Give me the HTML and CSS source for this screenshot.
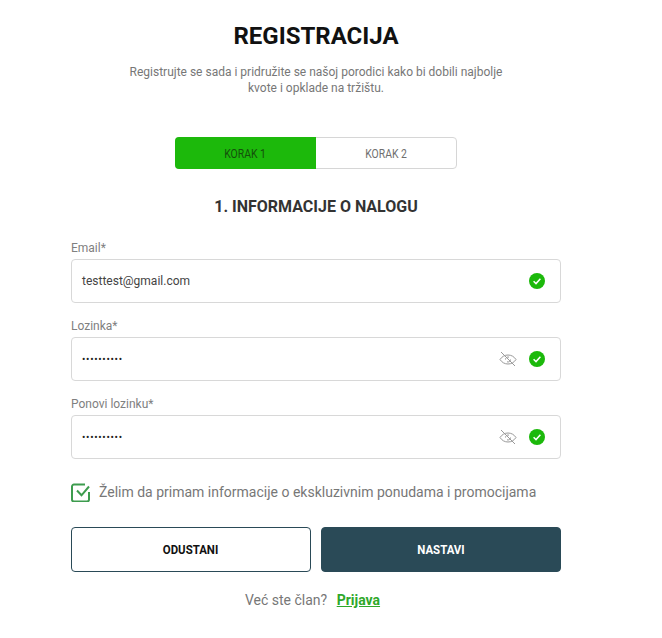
FILE: index.html
```html
<!DOCTYPE html>
<html lang="sr">
<head>
  <meta charset="UTF-8" />
  <meta name="viewport" content="width=device-width, initial-scale=1.0"/>
  <title>Registracija</title>
  <link rel="stylesheet" href="styles.css">
</head>
<body>
  <main class="register">
    <h1>REGISTRACIJA</h1>
    <p class="intro">Registrujte se sada i pridružite se našoj porodici kako bi dobili najbolje<br>kvote i opklade na tržištu.</p>

    <div class="steps">
      <div class="step step-active"><span>KORAK 1</span></div>
      <div class="step"><span>KORAK 2</span></div>
    </div>

    <h2>1. INFORMACIJE O NALOGU</h2>

    <form>
      <div class="field">
        <label>Email*</label>
        <div class="input">
          <span class="value">testtest@gmail.com</span>
          <svg class="ok" viewBox="0 0 16 16"><circle cx="8" cy="8" r="8"/><path d="M4.6 8.3l2.4 2.3 4.4-4.8"/></svg>
        </div>
      </div>

      <div class="field">
        <label>Lozinka*</label>
        <div class="input">
          <span class="value dots">••••••••••</span>
          <svg class="eye" viewBox="0 0 18 18"><path d="M1 9.500C3 6.500 5.700 5 9 5s6 1.500 8 4.500C15 12.500 12.300 14 9 14s-6-1.500-8-4.500z"/><path d="M6.500 9.500a2.500 2.500 0 0 1 3.500-2.300M11.500 9.500a2.500 2.500 0 0 1-3.500 2.300"/><path d="M2 2l14 14"/></svg>
          <svg class="ok" viewBox="0 0 16 16"><circle cx="8" cy="8" r="8"/><path d="M4.6 8.3l2.4 2.3 4.4-4.8"/></svg>
        </div>
      </div>

      <div class="field">
        <label>Ponovi lozinku*</label>
        <div class="input">
          <span class="value dots">••••••••••</span>
          <svg class="eye" viewBox="0 0 18 18"><path d="M1 9.500C3 6.500 5.700 5 9 5s6 1.500 8 4.500C15 12.500 12.300 14 9 14s-6-1.500-8-4.500z"/><path d="M6.500 9.500a2.500 2.500 0 0 1 3.500-2.300M11.500 9.500a2.500 2.500 0 0 1-3.500 2.300"/><path d="M2 2l14 14"/></svg>
          <svg class="ok" viewBox="0 0 16 16"><circle cx="8" cy="8" r="8"/><path d="M4.6 8.3l2.4 2.3 4.4-4.8"/></svg>
        </div>
      </div>

      <div class="consent">
        <svg class="check" viewBox="0 0 19 19"><path d="M14 1.500H3a2 2 0 0 0-2 2v13a2 2 0 0 0 2 2h13a2 2 0 0 0 2-2V9"/><path class="tick" d="M6 7.500l4.500 4.800L18 3.500"/></svg>
        <span>Želim da primam informacije o ekskluzivnim ponudama i promocijama</span>
      </div>

      <div class="buttons">
        <button type="button" class="btn btn-outline"><span>ODUSTANI</span></button>
        <button type="button" class="btn btn-dark"><span>NASTAVI</span></button>
      </div>
    </form>

    <p class="login">Već ste član? <a href="#">Prijava</a></p>
  </main>
</body>
</html>
```

FILE: styles.css
```css
body {
  margin: 0;
  background: #fff;
  font-family: Roboto, "Liberation Sans", sans-serif;
}
.register {
  width: 632px;
  box-sizing: border-box;
  padding: 21px 71px 0;
}
h1 {
  margin: 0;
  font-size: 24px;
  line-height: 30px;
  font-weight: 700;
  text-align: center;
  color: #111;
}
.intro {
  margin: 13px 0 0;
  font-size: 12px;
  line-height: 16px;
  text-align: center;
  color: #777;
}
.steps {
  display: flex;
  box-sizing: border-box;
  width: 282px;
  height: 32px;
  margin: 41px auto 0;
  border: 1px solid #d6d6d6;
  border-radius: 4px;
}
.step {
  flex: 1;
  display: flex;
  align-items: center;
  justify-content: center;
  font-size: 13px;
  color: #6f6f6f;
}
.step span {
  display: inline-block;
  transform: scaleX(0.8);
}
.step-active {
  margin: -1px 0 -1px -1px;
  border-radius: 4px 0 0 4px;
  background: #1cb90b;
  color: #14500c;
}
h2 {
  margin: 28px 0 0;
  font-size: 16px;
  line-height: 20px;
  font-weight: 700;
  text-align: center;
  color: #333;
}
form {
  margin-top: 23px;
}
.field {
  margin-bottom: 15px;
}
label {
  display: block;
  font-size: 12px;
  line-height: 16px;
  margin-bottom: 3px;
  color: #808080;
}
.input {
  display: flex;
  align-items: center;
  gap: 12px;
  height: 44px;
  box-sizing: border-box;
  padding: 0 15px 0 10px;
  border: 1px solid #d8d8d8;
  border-radius: 4px;
}
.value {
  flex: 1;
  font-size: 12px;
  color: #444;
}
.dots {
  font-size: 10px;
  letter-spacing: 0.7px;
  color: #222;
}
.ok {
  width: 16px;
  height: 16px;
}
.ok circle {
  fill: #1cb90b;
}
.ok path {
  fill: none;
  stroke: #fff;
  stroke-width: 1.5;
}
.eye {
  width: 18px;
  height: 18px;
  fill: none;
  stroke: #999;
  stroke-width: 1;
}
.consent {
  display: flex;
  align-items: center;
  gap: 9px;
  margin-top: 24px;
  font-size: 14px;
  line-height: 19px;
  color: #777;
}
.check {
  width: 19px;
  height: 19px;
  fill: none;
  stroke: #3d9c4e;
  stroke-width: 2;
}
.buttons {
  display: flex;
  gap: 10px;
  margin-top: 25px;
}
.btn {
  flex: 1;
  height: 45px;
  border-radius: 4px;
  font-family: inherit;
  font-size: 13px;
  font-weight: 700;
}
.btn span {
  display: inline-block;
  transform: scaleX(0.88);
}
.btn-outline {
  background: #fff;
  border: 1px solid #2a4a57;
  color: #111;
}
.btn-dark {
  background: #2a4a57;
  border: 1px solid #2a4a57;
  color: #fff;
}
.login {
  margin: 19px 0 0;
  padding-right: 7px;
  font-size: 14px;
  line-height: 18px;
  text-align: center;
  color: #777;
}
.login a {
  margin-left: 6px;
  font-weight: 700;
  color: #2fa82a;
}
```
